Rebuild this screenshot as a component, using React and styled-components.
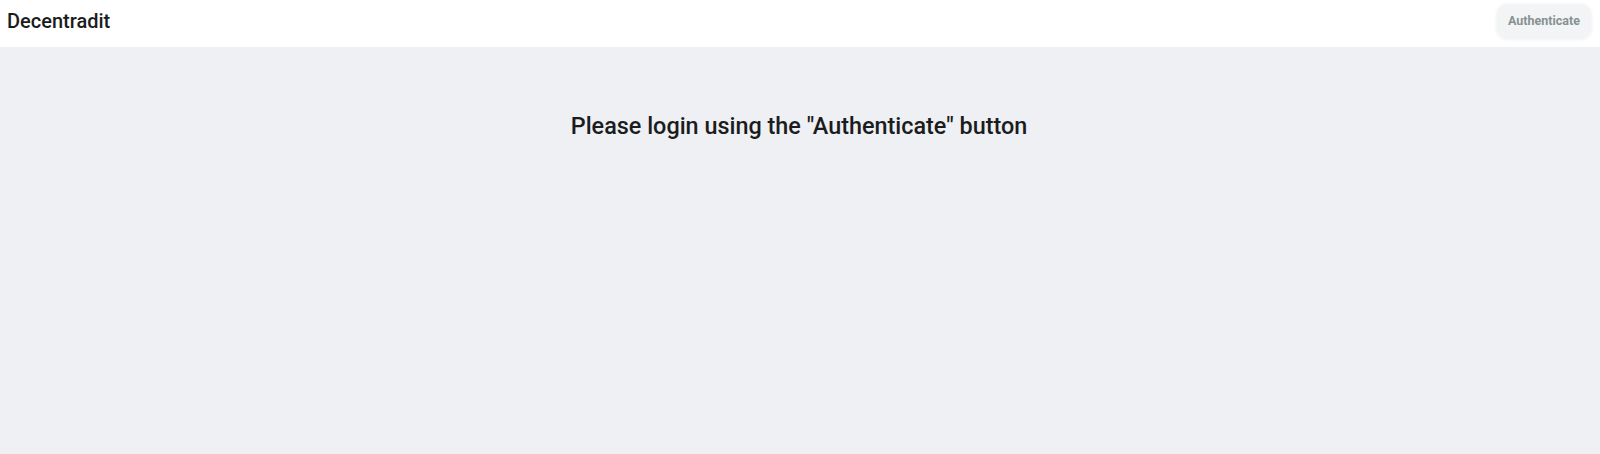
import React from "react";
import styled, { createGlobalStyle } from "styled-components";

const GlobalStyle = createGlobalStyle`
  html, body {
    margin: 0;
    padding: 0;
    background: #eef0f3;
    font-family: Roboto, "Liberation Sans", sans-serif;
    color: #1a1c20;
  }
`;

export default function App() {
  return (
    <Page>
      <GlobalStyle />
      <Header>
        <Title>Decentradit</Title>
        <AuthButton type="button">Authenticate</AuthButton>
      </Header>
      <Main>
        <Message>Please login using the "Authenticate" button</Message>
      </Main>
    </Page>
  );
}

const Page = styled.div`
  min-height: 454px;
  background: #eef0f3;
`;

const Header = styled.header`
  height: 47px;
  background: #ffffff;
  display: flex;
  align-items: center;
  justify-content: space-between;
  padding: 0 9px 0 7px;
  box-sizing: border-box;
`;

const Title = styled.div`
  font-size: 20px;
  font-weight: 500;
  padding-bottom: 5px;
`;

const AuthButton = styled.button`
  height: 34px;
  padding: 0 11px;
  margin-bottom: 6px;
  border: none;
  border-radius: 10px;
  background: #f3f4f5;
  box-shadow: 0 1px 4px rgba(0, 0, 0, 0.08);
  color: #879290;
  font-family: Roboto, "Liberation Sans", sans-serif;
  font-size: 12.5px;
  font-weight: 700;
`;

const Main = styled.main`
  display: flex;
  justify-content: center;
  padding-top: 65px;
`;

const Message = styled.h2`
  margin: 0;
  font-size: 23.4px;
  font-weight: 500;
  padding-right: 2px;
`;
